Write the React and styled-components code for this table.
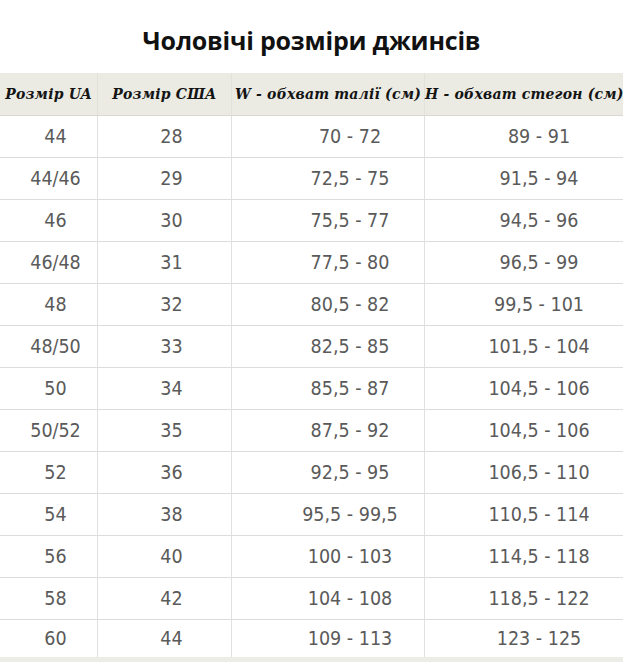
import React from "react";
import styled, { createGlobalStyle } from "styled-components";

const GlobalStyle = createGlobalStyle`
    html, body {
        margin: 0;
        padding: 0;
        background: #fff;
    }
    body {
        width: 623px;
        height: 662px;
        overflow: hidden;
    }
`;

const columns = [
    { title: "Розмір UA", pad: 14 },
    { title: "Розмір США", pad: 14 },
    { title: "W - обхват талії (см)", pad: 44 },
    { title: "H - обхват стегон (см)", pad: 30 },
];

const rows = [
    ["44", "28", "70 - 72", "89 - 91"],
    ["44/46", "29", "72,5 - 75", "91,5 - 94"],
    ["46", "30", "75,5 - 77", "94,5 - 96"],
    ["46/48", "31", "77,5 - 80", "96,5 - 99"],
    ["48", "32", "80,5 - 82", "99,5 - 101"],
    ["48/50", "33", "82,5 - 85", "101,5 - 104"],
    ["50", "34", "85,5 - 87", "104,5 - 106"],
    ["50/52", "35", "87,5 - 92", "104,5 - 106"],
    ["52", "36", "92,5 - 95", "106,5 - 110"],
    ["54", "38", "95,5 - 99,5", "110,5 - 114"],
    ["56", "40", "100 - 103", "114,5 - 118"],
    ["58", "42", "104 - 108", "118,5 - 122"],
    ["60", "44", "109 - 113", "123 - 125"],
];

const SizeChart = () => {
    return (
        <Page>
            <GlobalStyle />
            <TitleBar>
                <Title>Чоловічі розміри джинсів</Title>
            </TitleBar>
            <Table>
                <HeadRow>
                    {columns.map((c, i) => (
                        <HeadCell key={c.title} last={i === columns.length - 1}>
                            {c.title}
                        </HeadCell>
                    ))}
                </HeadRow>
                {rows.map((r, ri) => (
                    <BodyRow key={ri} short={ri === rows.length - 1}>
                        {r.map((v, ci) => (
                            <BodyCell
                                key={ci}
                                pad={columns[ci].pad}
                                last={ci === r.length - 1}
                            >
                                {v}
                            </BodyCell>
                        ))}
                    </BodyRow>
                ))}
                <FootBand />
            </Table>
        </Page>
    );
};

const Page = styled.div`
    width: 623px;
    display: flex;
    flex-direction: column;
`;

const TitleBar = styled.div`
    height: 73px;
    display: flex;
    align-items: center;
    justify-content: center;
    padding-top: 6px;
    box-sizing: border-box;
`;

const Title = styled.h1`
    margin: 0;
    font-family: "Open Sans", "DejaVu Sans", sans-serif;
    font-weight: 700;
    font-size: 25px;
    color: #111;
    letter-spacing: -0.2px;
`;

const Table = styled.div`
    display: flex;
    flex-direction: column;
`;

const Grid = styled.div`
    display: grid;
    grid-template-columns: 98px 134px 193px 1fr;
`;

const HeadRow = styled(Grid)`
    height: 42px;
    background: #ebebe4;
    border-bottom: 1px solid #d9d9d2;
`;

const HeadCell = styled.div`
    display: flex;
    align-items: center;
    justify-content: center;
    white-space: nowrap;
    font-family: "DejaVu Serif", "Liberation Serif", serif;
    font-style: italic;
    font-weight: 700;
    font-size: 14px;
    letter-spacing: 0.2px;
    color: #141414;
    border-right: ${(p) => (p.last ? "none" : "1px solid #e2e2db")};
`;

const BodyRow = styled(Grid)`
    height: ${(p) => (p.short ? "37px" : "42px")};
    border-bottom: ${(p) => (p.short ? "none" : "1px solid #dcdcdc")};
    box-sizing: border-box;
`;

const BodyCell = styled.div`
    display: flex;
    align-items: center;
    justify-content: center;
    padding-left: ${(p) => p.pad}px;
    font-family: "DejaVu Sans Condensed", "DejaVu Sans", sans-serif;
    font-size: 19.5px;
    color: #5a5a5a;
    border-right: ${(p) => (p.last ? "none" : "1px solid #e0e0e0")};
`;

const FootBand = styled.div`
    height: 6px;
    background: #ecede6;
`;

export default SizeChart;
